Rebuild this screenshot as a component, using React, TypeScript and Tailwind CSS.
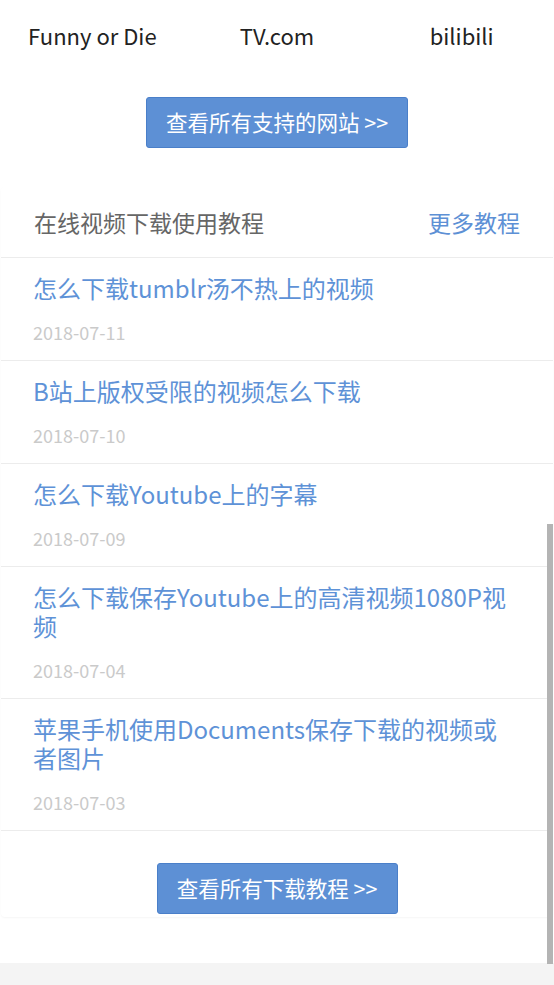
import React from 'react';

const sites = ['Funny or Die', 'TV.com', 'bilibili'];

const tutorials = [
  { title: '怎么下载tumblr汤不热上的视频', date: '2018-07-11' },
  { title: 'B站上版权受限的视频怎么下载', date: '2018-07-10' },
  { title: '怎么下载Youtube上的字幕', date: '2018-07-09' },
  { title: '怎么下载保存Youtube上的高清视频1080P视频', date: '2018-07-04' },
  { title: '苹果手机使用Documents保存下载的视频或者图片', date: '2018-07-03' },
];

const App: React.FC = () => {
  return (
    <div className="relative w-[554px] min-h-[985px] bg-white font-['Noto_Sans_CJK_SC','Noto_Sans',sans-serif] overflow-hidden">
      {/* Supported sites */}
      <div className="grid grid-cols-3 h-[70px] items-center text-[22px] text-[#222]">
        {sites.map((site) => (
          <div key={site} className="text-center">
            {site}
          </div>
        ))}
      </div>

      <div className="flex justify-center mt-[27px]">
        <button className="w-[262px] h-[51px] rounded-[3px] border border-[#4a7fc9] bg-[#5d90d5] text-white text-[21.5px]">
          查看所有支持的网站 &gt;&gt;
        </button>
      </div>

      {/* Tutorials card */}
      <div className="mt-[39px] mx-[1px] rounded-[4px] bg-white shadow-[0_1px_2px_rgba(0,0,0,0.04)] pb-[3px]">
        <div className="flex items-center justify-between h-[70px] px-[33px] text-[23px]">
          <span className="text-[#666]">在线视频下载使用教程</span>
          <span className="text-[#5d90d5]">更多教程</span>
        </div>

        {tutorials.map((item) => (
          <div key={item.date} className="border-t border-[#ececec] px-[32px] pt-[15px] pb-[14px]">
            <div className="text-[24px] leading-[29px] text-[#5e92d7]">{item.title}</div>
            <div className="mt-[17px] text-[18px] leading-[27px] text-[#cacaca]">{item.date}</div>
          </div>
        ))}

        <div className="border-t border-[#ececec] flex justify-center pt-[32px]">
          <button className="w-[241px] h-[51px] rounded-[3px] border border-[#4a7fc9] bg-[#5d90d5] text-white text-[21.5px]">
            查看所有下载教程 &gt;&gt;
          </button>
        </div>
      </div>

      {/* Bottom band */}
      <div className="absolute left-0 right-0 top-[963px] h-[22px] bg-[#f4f4f4]" />

      {/* Scrollbar thumb */}
      <div className="absolute right-[1px] top-[524px] w-[6px] h-[440px] bg-[#b4b4b4]" />
    </div>
  );
};

export default App;
